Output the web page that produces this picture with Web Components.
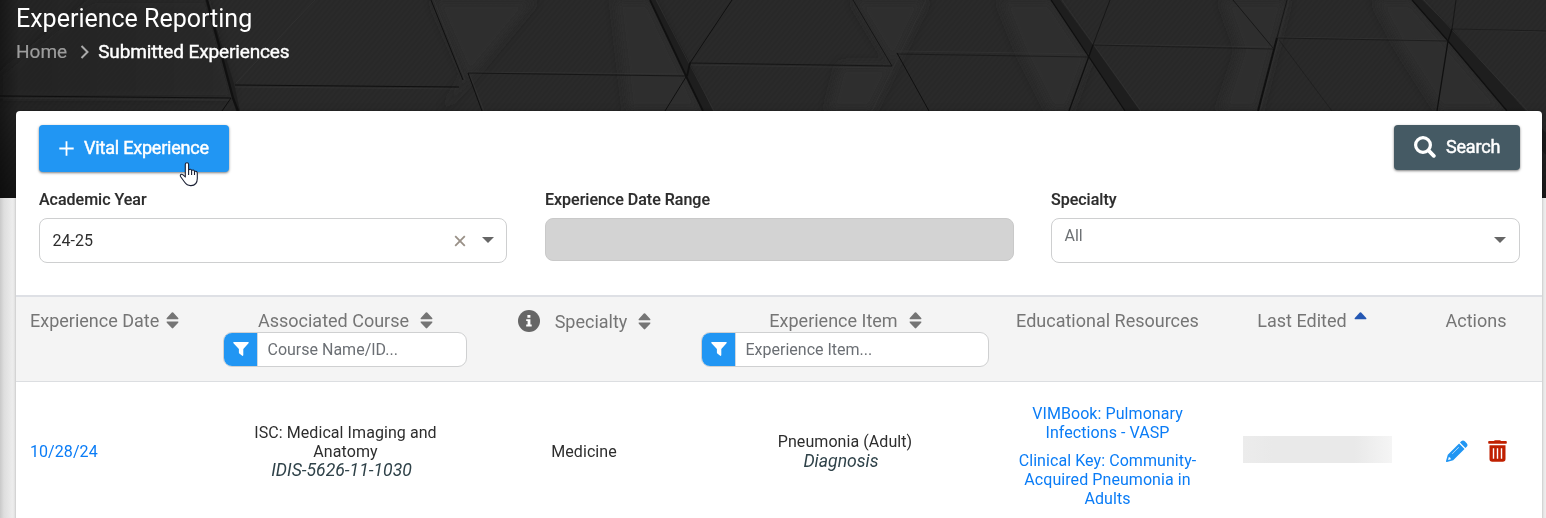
<!DOCTYPE html>
<html lang="en">
<head>
<meta charset="utf-8">
<title>Experience Reporting</title>
<style>
html,body{margin:0;height:518px;overflow:hidden}
body{font-family:Roboto,"Liberation Sans",sans-serif;color:#2d2d2d;background:#ededed}
</style>
</head>
<body>
<experience-page></experience-page>
<script>
const define = (name, html) => customElements.define(name, class extends HTMLElement {
  constructor() {
    super();
    const t = document.createElement('template');
    t.innerHTML = html;
    this.attachShadow({mode: 'open'}).append(t.content.cloneNode(true));
  }
});

define('hero-backdrop', `
<style>:host{display:block;position:absolute;inset:0;z-index:0}svg{display:block}</style>
<svg width="1546" height="198" viewBox="0 0 1546 198" fill="none">
  <defs>
    <pattern id="h" width="4" height="4" patternUnits="userSpaceOnUse" patternTransform="rotate(40)"><rect width="4" height="4" fill="#2a2a2a"/><rect width="2" height="4" fill="#282828"/></pattern>
    <linearGradient id="e"><stop offset="0" stop-color="#000" stop-opacity=".42"/><stop offset=".012" stop-color="#000" stop-opacity=".12"/><stop offset=".14" stop-color="#000" stop-opacity="0"/></linearGradient>
    <linearGradient id="d" x2="0" y2="1"><stop offset=".52" stop-color="#000" stop-opacity="0"/><stop offset="1" stop-color="#000" stop-opacity=".42"/></linearGradient>
    <filter id="b" x="-10%" width="120%"><feGaussianBlur stdDeviation="5"/></filter>
  </defs>
  <rect width="1546" height="198" fill="url(#h)"/>
  <g fill="#2e2e2e" filter="url(#b)">
    <path d="M92 0H207L233 98H0V74Z" opacity=".35"/>
    <path d="M433 0H535L443 111L466 75Z"/>
    <path d="M615 0H650L703 111H628Z"/>
    <path d="M853 0H926L872 111H828L840 65H892Z"/>
    <path d="M1000 0H1051L1089 57L1069 111H1050L1020 50Z"/>
    <path d="M1222 0H1287L1258 111H1220L1240 50Z"/>
    <path d="M1375 0H1412L1507 111H1440L1400 48Z"/>
  </g>
  <g fill="#1e1e1e">
    <path d="M650 0H656L690 63L713 111H703L686 76Z"/>
    <path d="M1051 0H1060L1093 45L1140 111H1125L1089 57Z"/>
    <path d="M1412 0H1422L1452 29L1526 111L1546 133V155L1507 111L1448 41Z"/>
    <path d="M205 0H208L234 84L240 111H236L232 98Z"/>
  </g>
  <g stroke="#363636" stroke-opacity=".6">
    <path d="M315 0L236 83M0 98L231 100M235 87L459 89M434 0L465 80M690 65L892 68M926 0L872 111M897 51L1089 54M1094 44L1273 47M1280 37L1448 40M1453 29L1546 32M656 0L714 111M1062 0L1141 111M1424 0L1528 111M470 75L484 111M1289 0L1260 111M468 72L686 74"/>
  </g>
  <g stroke="#101010">
    <path stroke-width="2.2" d="M207 0L233 98L238 111"/>
    <path d="M0 96L231 98L222 111M235 85L459 87M431 0L463 80M468 73L482 111"/>
    <path stroke-opacity=".75" d="M468 73L686 76M690 63L892 66L853 0"/>
    <path stroke-width="1.8" d="M650 0L686 76L703 111M690 63L687 76"/>
    <path d="M732 0L690 63M686 77L665 111M897 53L929 111"/>
    <path stroke-opacity=".5" d="M897 54L1089 57M1093 45L1273 49M1278 38L1448 41M1452 29L1546 31"/>
    <path stroke-opacity=".35" d="M1279 40L1332 111"/>
    <path stroke-width="1.3" d="M1051 0L1089 57L1125 111M1093 45L1069 111M1412 0L1448 41L1507 111M1452 29L1448 41L1437 111"/>
    <path stroke-opacity=".7" d="M1110 0L1093 45M1456 0L1452 29M1233 0L1273 48M1287 0L1275 45"/><path stroke-width="2" d="M1277 38L1258 111"/>
  </g>
  <rect width="1546" height="198" fill="url(#e)"/><rect width="1546" height="198" fill="url(#d)"/>
</svg>`);

define('page-heading', `
<style>
:host{display:block;position:relative;height:111px;color:#fff}
.c{position:relative;z-index:1;padding-left:16px}
h1{margin:0;padding-top:5px;font:400 25px/28px Roboto;white-space:nowrap}
nav{display:flex;align-items:center;height:24px;margin-top:7px;font:400 19px/24px Roboto;white-space:nowrap}
.a{color:#9d9d9d;-webkit-text-stroke:.2px #9d9d9d}.n{-webkit-text-stroke:.4px #fff;letter-spacing:-.13px}svg{margin:0 8px 0 13px}
</style>
<div class="c"><h1><slot></slot></h1>
<nav><span class="a">Home</span><svg width="10" height="14" viewBox="0 0 10 14" fill="none" stroke="#aaa" stroke-width="2"><path d="M1.5 1L7.5 7L1.5 13"/></svg><span class="n">Submitted Experiences</span></nav></div>`);

define('action-button', `
<style>
:host{display:flex;box-sizing:border-box;align-items:center;background:var(--bg);border-radius:4px;color:#fff;font:400 18px/24px Roboto;letter-spacing:-.2px;-webkit-text-stroke:.45px #fff;padding:0 0 1px 20px;height:var(--h,47px);box-shadow:0 1px 3px rgba(0,0,0,.35),0 1px 2px rgba(0,0,0,.2);white-space:nowrap}
</style><slot></slot>`);

define('field-box', `
<style>
:host{display:block;flex:none;width:469px}
label{display:block;font:500 16px/20px Roboto;color:#2d2d2d;-webkit-text-stroke:.15px #2d2d2d;height:28px;white-space:nowrap}
.b{box-sizing:border-box;display:flex;align-items:center;height:45px;border:1px solid #cecfd0;border-radius:8px;background:#fff;padding:0 var(--pr,13px) 0 12.5px;font:400 16px/20px Roboto}
:host([disabled]) .b{height:43px;background:#d3d3d3;border-color:#c9c9c9}
.g{flex:1}
</style>
<label><slot name="label"></slot></label><div class="b"><slot></slot><span class="g"></span><slot name="icons"></slot></div>`);

define('sort-icon', `
<style>:host{display:block;width:13px;height:17px}svg{display:block;fill:#757575}</style>
<svg width="13" height="17" viewBox="0 0 13 17"><path d="M6.5.3Q6.9.3 7.2.6L12.2 6Q13 7.3 11.8 7.3H1.2Q0 7.3.8 6L5.8.6Q6.1.3 6.5.3ZM1.2 9.5H11.8Q13 9.5 12.2 10.8L7.2 16.1Q6.5 16.7 5.8 16.1L.8 10.8Q0 9.5 1.2 9.5Z"/></svg>`);

define('filter-input', `
<style>
:host{display:flex;box-sizing:border-box;height:35px;border:1px solid #cfd0d1;border-radius:9px;overflow:hidden;background:#fff;font:400 16px/33px Roboto;color:#6b6f74;text-align:left}
.i{display:flex;width:33px;background:#2196f3;border-right:1px solid #cfd8e0;justify-content:center;align-items:center}
.i svg{margin-top:-2px}
.t{padding-left:9.5px;white-space:nowrap}
</style>
<span class="i"><svg width="16" height="16" viewBox="0 0 16 16" fill="#fff"><path d="M.9 1H15.1Q16.3 1.2 15.5 2.3L10.3 8V14Q10 15.4 8.9 14.6L6.3 12.6Q5.9 12.2 5.9 11.6V8L.5 2.3Q-.3 1.2.9 1Z"/></svg></span><span class="t"><slot></slot></span>`);

define('table-grid', `
<style>:host{display:grid;grid-template-columns:196px 266px 212px 309px 216px 205px 122px}</style><slot></slot>`);

define('experience-table', `
<style>
:host{display:block}
.h{background:#f4f4f4;border-top:2px solid #dee0e5;border-bottom:1px solid #dcdee1;height:84px;color:#757575;font:400 18px/24px Roboto}
.h .t{display:flex;height:24px;margin-top:12px;justify-content:center;align-items:center;white-space:nowrap}
sort-icon{margin:-2px 0 0 11px}
.r{font:400 16px/19.2px Roboto;letter-spacing:.07px;height:139px;align-items:center;text-align:center}
.r>div{white-space:nowrap}
a{color:#0a7cf6;display:block}i{display:block;padding-right:8px;color:#2f4249;font-size:17.6px;letter-spacing:0}
.box{width:149px;height:27px;margin:-4px auto 0;background:linear-gradient(90deg,#ececec,#e9e9e9 20%,#e9e9e9 75%,#f5f5f5)}
.act{display:flex;align-items:center;padding-left:26px;margin-top:-1px}
</style>
<table-grid class="h">
<div><div class="t" style="justify-content:flex-start;padding-left:14px"><span>Experience Date</span><sort-icon style="margin-left:6.5px"></sort-icon></div></div>
<div><div class="t" style="padding-left:1px"><span>Associated Course</span><sort-icon></sort-icon></div><filter-input style="width:244px;margin:-1px auto 0">Course Name/ID...</filter-input></div>
<div><div class="t" style="margin-top:13px;padding-left:1px"><svg width="22" height="22" viewBox="0 0 22 22" style="margin:-2px 15px 0 0"><circle cx="11" cy="11" r="11" fill="#666"/><path fill="#fff" d="M9.4 5H12.4V7.7H9.4ZM8.2 9.2H12.4V14.6H13.7V16.4H8.2V14.6H9.6V11H8.2Z"/></svg><span>Specialty</span><sort-icon></sort-icon></div></div>
<div><div class="t" style="padding-left:2px"><span>Experience Item</span><sort-icon></sort-icon></div><filter-input style="width:288px;margin:-1px 0 0 11px">Experience Item...</filter-input></div>
<div><div class="t" style="padding-left:1px">Educational Resources</div></div>
<div><div class="t" style="padding-right:11px"><span>Last Edited</span><svg width="13" height="8" viewBox="0 0 13 8" style="margin:-10px 0 0 7px"><path fill="#2457b3" d="M6.5.3Q6.9.3 7.2.6L12.2 6Q13 7.3 11.8 7.3H1.2Q0 7.3.8 6L5.8.6Q6.1.3 6.5.3Z"/></svg></div></div>
<div><div class="t" style="padding-right:10px">Actions</div></div>
</table-grid>
<table-grid class="r">
<div style="text-align:left;padding-left:14px"><a>10/28/24</a></div>
<div style="padding-left:1px">ISC: Medical Imaging and<br>Anatomy<i>IDIS-5626-11-1030</i></div>
<div>Medicine</div>
<div style="padding-left:1px">Pneumonia (Adult)<i>Diagnosis</i></div>
<div style="padding:9px 0 0 1px"><a>VIMBook: Pulmonary<br>Infections - VASP</a><a style="margin-top:8.6px">Clinical Key: Community-<br>Acquired Pneumonia in<br>Adults</a></div>
<div><div class="box"></div></div>
<div class="act">
<svg width="22" height="22" viewBox="0 0 22 22" fill="#2196f3"><path d="M15.2 1.3Q17 -.5 18.8 1.3L20.7 3.2Q22.3 5 20.7 6.8L19.4 8L14 2.6Z"/><path fill-rule="evenodd" d="M13.1 3.5L18.5 8.9L7.2 20.2L1 22Q-.2 22.2 0 21L1.8 14.8ZM12.6 7.1L6 13.7L6.3 14L12.9 7.4ZM2.8 17.1L2.1 19.9L4.9 19.2Q4.8 17.3 2.8 17.1Z"/></svg>
<svg width="19" height="22" viewBox="0 0 19 22" style="margin-left:20px"><path fill="#c02000" fill-rule="evenodd" d="M6 1.1Q6.3.2 7.2.2H11.8Q12.7.2 13 1.1H18Q18.8 1.1 18.8 2V3Q18.8 3.8 18 3.8H1Q.2 3.8.2 3V2Q.2 1.1 1 1.1ZM1.5 5.3H17.5V19Q17.5 21.8 14.7 21.8H4.3Q1.5 21.8 1.5 19ZM4.8 8.2V18.8H6.2V8.2ZM8.8 8.2V18.8H10.2V8.2ZM12.8 8.2V18.8H14.2V8.2Z"/></svg>
</div>
</table-grid>`);

define('experience-page', `
<style>
:host{display:block;position:relative;width:1546px;height:518px;overflow:hidden;background:linear-gradient(90deg,#c9c9c9,#dedede 4px,#ececec 12px,#ededed 16px)}
.top{position:absolute;left:0;top:0;width:1546px;height:198px}
.card{position:relative;z-index:1;width:1526px;height:420px;margin-left:16px;background:#fff;border-radius:4px 4px 0 0;box-shadow:0 0 3px rgba(0,0,0,.3)}
.bar{display:flex;box-sizing:border-box;justify-content:space-between;align-items:flex-start;padding:14px 22px 0 23px;height:79px}
svg{display:block;flex:none}
.fields{display:flex;gap:37px;padding-left:23px;height:105px}
.cur{position:absolute;left:179px;top:162px;z-index:3}
</style>
<div class="top"><hero-backdrop></hero-backdrop></div>
<page-heading>Experience Reporting</page-heading>
<div class="card">
<div class="bar"><action-button style="--bg:#2196f3;width:190px"><svg width="15" height="15" viewBox="0 0 15 15" style="margin-right:10px"><path stroke="#fff" stroke-width="1.8" d="M7.5.3V14.7M.3 7.5H14.7"/></svg>Vital Experience</action-button>
<action-button style="--bg:#455a64;--h:45px;width:126px"><svg width="22" height="22" viewBox="0 0 22 22" fill="none" stroke="#fff" style="margin-right:10px"><circle cx="9" cy="9" r="7.4" stroke-width="3.2"/><path stroke-width="3.8" stroke-linecap="round" d="M14.7 14.7L19.8 19.8"/></svg>Search</action-button></div>
<div class="fields">
<field-box style="width:468px;margin-right:1px;--pr:12px"><span slot="label">Academic Year</span>24-25<svg slot="icons" width="12" height="12" viewBox="0 0 12 12" style="margin-right:16px"><path stroke="#999087" stroke-width="1.8" d="M1.2 1.2L10.8 10.8M10.8 1.2L1.2 10.8"/></svg><svg slot="icons" width="12" height="6" viewBox="0 0 12 6" style="margin-top:-1px"><path fill="#666" d="M0 0H12L6 6Z"/></svg></field-box>
<field-box disabled><span slot="label">Experience Date Range</span></field-box>
<field-box><span slot="label">Specialty</span><span style="color:#6d7174;margin-top:-10px">All</span><svg slot="icons" width="12" height="6" viewBox="0 0 12 6" style="margin-top:-1px"><path fill="#666" d="M0 0H12L6 6Z"/></svg></field-box>
</div>
<experience-table></experience-table>
</div>
<svg class="cur" width="20" height="25" viewBox="0 0 20 25"><path fill="#fff" stroke="#1a1f33" stroke-width="1.1" stroke-linejoin="round" d="M6.3 14V2.3Q6.5.8 8 .8T9.6 2.3V8Q11.8 6.4 12.6 8.5Q14.6 7.2 15.5 9.3Q18.2 8.7 18.3 11.4V16.5Q18.2 23.5 12 23.6Q8 23.8 5.7 20.3L1.5 14.5Q.8 12.5 2.6 12.3Q3.9 12.2 6.3 15ZM9.6 8V13M12.6 8.5V13M15.5 9.3V13"/></svg>`);
</script>
</body>
</html>
